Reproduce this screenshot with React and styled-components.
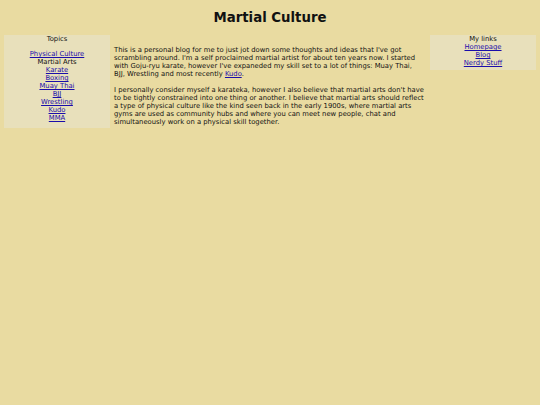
import styled, { createGlobalStyle } from 'styled-components';

const Global = createGlobalStyle`
  html, body {
    margin: 0;
    padding: 0;
    background: #e9dba1;
    font-family: "DejaVu Sans", Verdana, sans-serif;
    color: #111;
  }
`;

const Page = styled.div`
  padding: 0 4px;
`;

const Title = styled.h1`
  margin: 0;
  padding-top: 9px;
  height: 26px;
  font-size: 13.3px;
  line-height: 17px;
  text-align: center;
  font-weight: bold;
`;

const Layout = styled.div`
  display: grid;
  grid-template-columns: 106px 1fr 106px;
  gap: 4px;
  align-items: start;
`;

const Sidebar = styled.div`
  background: #e8e0bb;
  font-size: 6.8px;
  line-height: 8px;
  text-align: center;
  padding: ${p => p.pad};
`;

const SideHead = styled.div`
  margin-bottom: ${p => p.gap || '0'};
`;

const LinkList = styled.ul`
  list-style: none;
  margin: 0;
  padding: 0;
`;

const Item = styled.li``;

const Link = styled.a`
  color: #1a0dab;
  text-decoration: underline;
`;

const Main = styled.div`
  font-size: 6.8px;
  line-height: 8px;
  padding-top: 11px;
`;

const Para = styled.p`
  margin: 0 0 8px;
`;

const topics = ['Karate', 'Boxing', 'Muay Thai', 'BJJ', 'Wrestling', 'Kudo', 'MMA'];

export default function App() {
  return (
    <Page>
      <Global />
      <Title>Martial Culture</Title>
      <Layout>
        <Sidebar pad="0 0 6px">
          <SideHead gap="7px">Topics</SideHead>
          <LinkList>
            <Item><Link href="#">Physical Culture</Link></Item>
            <Item>Martial Arts</Item>
            {topics.map(t => (
              <Item key={t}><Link href="#">{t}</Link></Item>
            ))}
          </LinkList>
        </Sidebar>
        <Main>
          <Para>
            This is a personal blog for me to just jot down some thoughts and ideas that I've got
            scrambling around. I'm a self proclaimed martial artist for about ten years now. I started
            with Goju-ryu karate, however I've expaneded my skill set to a lot of things: Muay Thai,
            {' '}BJJ,{'\u00a0'}Wrestling and most recently <Link href="#">Kudo</Link>.
          </Para>
          <Para>
            I personally consider myself a karateka, however I also believe that martial arts don't have
            to be tightly constrained into one thing or another. I believe that martial arts should reflect
            a type of physical culture like the kind seen back in the early 1900s, where martial arts
            gyms are used as community hubs and where you can meet new people, chat and
            simultaneously work on a physical skill together.
          </Para>
        </Main>
        <Sidebar pad="0 0 3px">
          <SideHead>My links</SideHead>
          <LinkList>
            <Item><Link href="#">Homepage</Link></Item>
            <Item><Link href="#">Blog</Link></Item>
            <Item><Link href="#">Nerdy Stuff</Link></Item>
          </LinkList>
        </Sidebar>
      </Layout>
    </Page>
  );
}
